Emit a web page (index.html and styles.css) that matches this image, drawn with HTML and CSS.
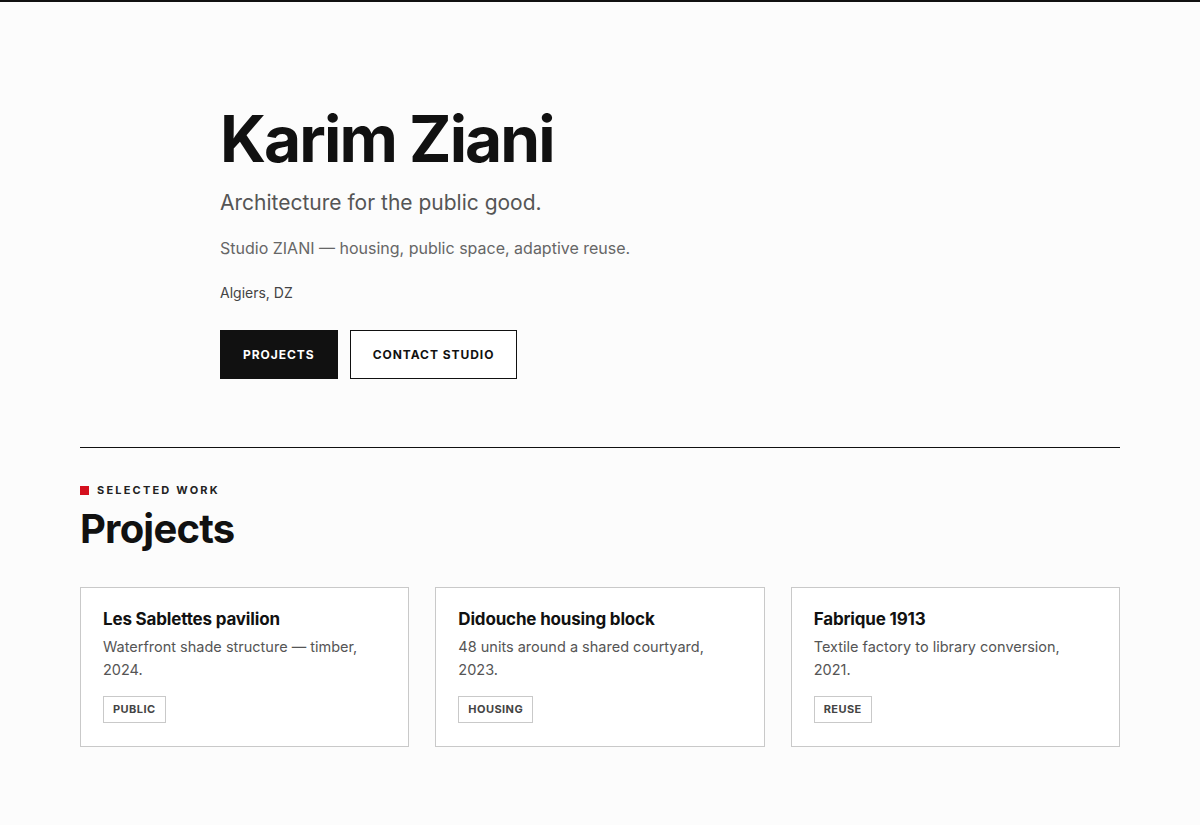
FILE: index.html
```html
<!DOCTYPE html>
<html lang="en">
<head>
    <meta charset="UTF-8">
    <meta name="viewport" content="width=device-width, initial-scale=1.0">
    <title>Karim Ziani — Studio ZIANI</title>
    <link rel="stylesheet" href="styles.css">
</head>
<body>
    <div class="page">
        <header class="hero">
            <h1>Karim Ziani</h1>
            <p class="tagline">Architecture for the public good.</p>
            <p class="studio">Studio ZIANI — housing, public space, adaptive reuse.</p>
            <p class="location">Algiers, DZ</p>
            <div class="actions">
                <a href="#projects" class="btn btn-primary">Projects</a>
                <a href="#contact" class="btn btn-outline">Contact studio</a>
            </div>
        </header>

        <section id="projects" class="work">
            <div class="eyebrow"><span class="eyebrow-mark"></span>Selected work</div>
            <h2>Projects</h2>

            <div class="cards">
                <article class="card">
                    <h3>Les Sablettes pavilion</h3>
                    <p>Waterfront shade structure — timber, 2024.</p>
                    <span class="tag">Public</span>
                </article>
                <article class="card">
                    <h3>Didouche housing block</h3>
                    <p>48 units around a shared courtyard, 2023.</p>
                    <span class="tag">Housing</span>
                </article>
                <article class="card">
                    <h3>Fabrique 1913</h3>
                    <p>Textile factory to library conversion, 2021.</p>
                    <span class="tag">Reuse</span>
                </article>
            </div>
        </section>
    </div>
</body>
</html>
```

FILE: styles.css
```css
* {
    box-sizing: border-box;
}

body {
    margin: 0;
    font-family: Inter, "Liberation Sans", sans-serif;
    background: #fcfcfc;
    color: #111;
    border-top: 2px solid #111;
}

.page {
    width: 1040px;
    margin: 0 auto;
    padding-bottom: 78px;
}

.hero {
    padding: 105px 140px 0;
}

.hero h1 {
    margin: 0;
    font-size: 64px;
    line-height: 1;
    font-weight: 700;
    letter-spacing: -0.03em;
    color: #111;
}

.tagline {
    margin: 17px 0 0 0;
    font-size: 21px;
    line-height: 1.4;
    color: #555;
}

.studio {
    margin: 19px 0 0 0;
    font-size: 16px;
    line-height: 1.5;
    color: #666;
}

.location {
    margin: 22px 0 0 0;
    font-size: 14px;
    line-height: 1.5;
    color: #444;
}

.actions {
    display: flex;
    gap: 12px;
    margin-top: 27px;
}

.btn {
    display: inline-flex;
    align-items: center;
    justify-content: center;
    height: 49px;
    padding: 0 22px;
    font-size: 12px;
    font-weight: 700;
    letter-spacing: 0.08em;
    text-transform: uppercase;
    text-decoration: none;
    border: 1px solid #111;
}

.btn-primary {
    background: #111;
    color: #fff;
}

.btn-outline {
    background: #fff;
    color: #111;
}

.work {
    margin-top: 68px;
    border-top: 1px solid #111;
    padding-top: 35px;
}

.eyebrow {
    display: flex;
    align-items: center;
    gap: 8px;
    font-size: 11px;
    line-height: 14px;
    font-weight: 700;
    letter-spacing: 0.2em;
    text-transform: uppercase;
    color: #222;
}

.eyebrow-mark {
    width: 9px;
    height: 9px;
    background: #d4101e;
}

.work h2 {
    margin: 10px 0 0 0;
    font-size: 40px;
    line-height: 1.1;
    font-weight: 700;
    letter-spacing: -0.02em;
    color: #111;
}

.cards {
    display: grid;
    grid-template-columns: repeat(3, 1fr);
    gap: 26px;
    margin-top: 36px;
}

.card {
    background: #fff;
    border: 1px solid #c9c9c9;
    padding: 20px 22px 23px;
}

.card h3 {
    margin: 0;
    font-size: 17px;
    line-height: 22px;
    font-weight: 700;
    letter-spacing: -0.01em;
    color: #111;
}

.card p {
    margin: 5px 0 0 0;
    font-size: 14.5px;
    line-height: 23px;
    color: #555;
}

.tag {
    display: inline-block;
    margin-top: 15px;
    padding: 0 9px;
    height: 27px;
    line-height: 25px;
    border: 1px solid #c9c9c9;
    font-size: 11px;
    font-weight: 700;
    letter-spacing: 0.04em;
    text-transform: uppercase;
    color: #444;
}
```
